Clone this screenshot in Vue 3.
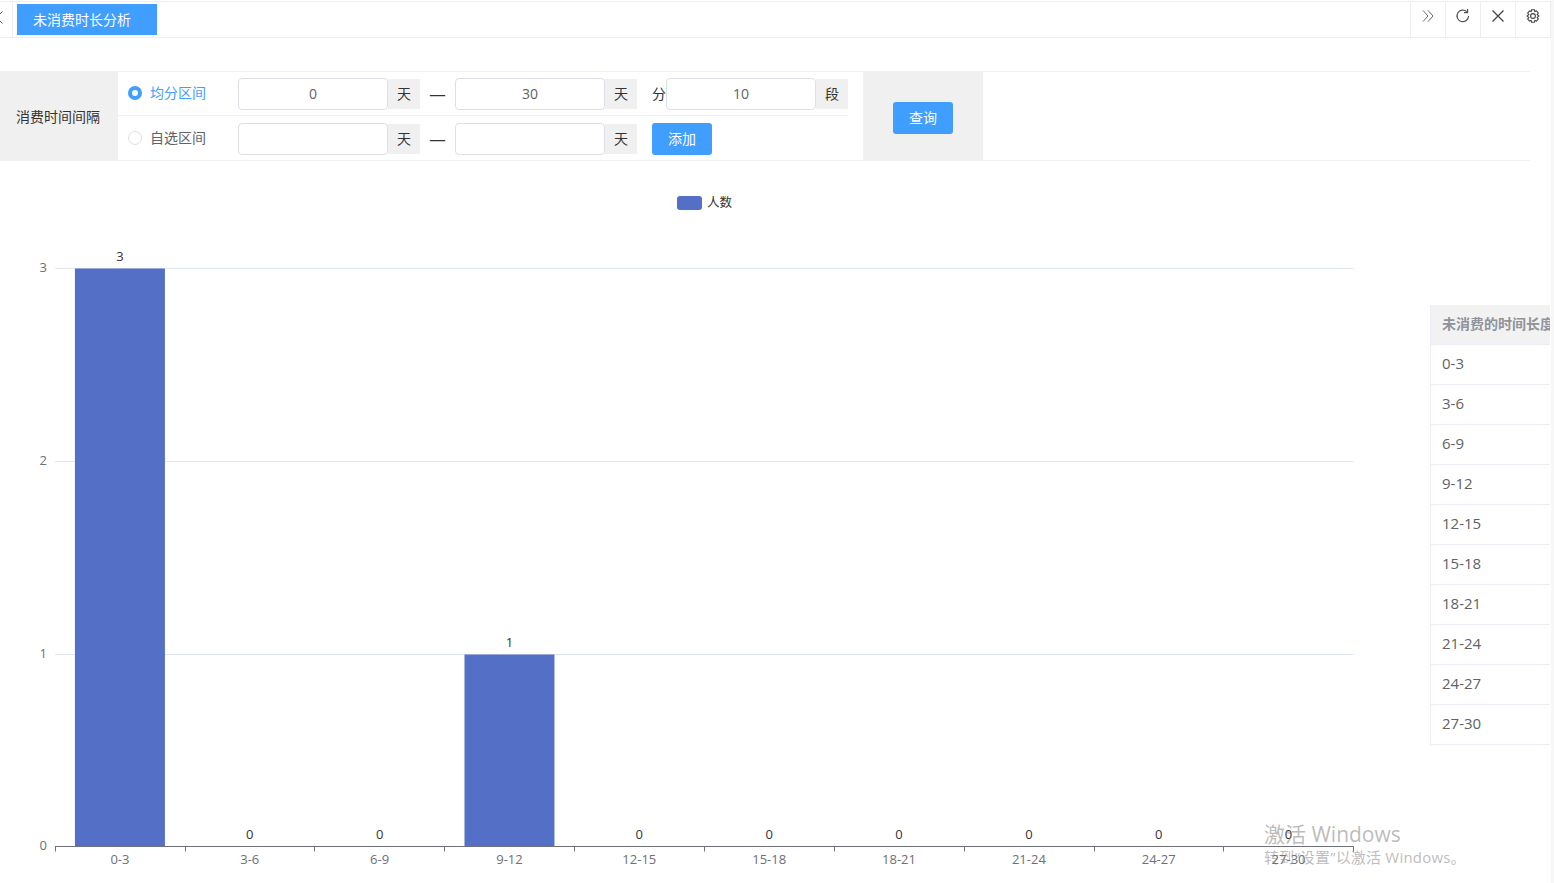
<script setup>
import { ref, computed } from "vue";

const startDay = ref("0");
const endDay = ref("30");
const segments = ref("10");
const mode = ref("avg");
const customStart = ref("");
const customEnd = ref("");

// 每段 3 天，人数
const rows = [
  { name: "0-3", value: 3 },
  { name: "3-6", value: 0 },
  { name: "6-9", value: 0 },
  { name: "9-12", value: 1 },
  { name: "12-15", value: 0 },
  { name: "15-18", value: 0 },
  { name: "18-21", value: 0 },
  { name: "21-24", value: 0 },
  { name: "24-27", value: 0 },
  { name: "27-30", value: 0 },
];

// 圖表座標，svg 從頁面 y=161 開始
const left = 55;
const right = 1353.5;
const top = 107.5;
const bottom = 685.5;
const step = (right - left) / rows.length;
const barWidth = 90;

const yOf = (v) => Math.ceil(bottom - ((bottom - top) / 3) * v - 0.5) + 0.5;
const bars = computed(() =>
  rows.map((r, i) => ({
    ...r,
    cx: left + step * i + step / 2,
    y: yOf(r.value),
    h: bottom - yOf(r.value),
  }))
);
const ticks = computed(() =>
  Array.from({ length: rows.length + 1 }, (_, i) => Math.trunc(left + step * i + 0.2) + 0.5)
);
</script>

<template>
  <div class="page">
    <div class="tabs">
      <div class="tab-prev">
        <svg width="12" height="35" viewBox="0 0 12 35" fill="none" stroke="#555" stroke-width="1">
          <path d="M2.5 9.5 L0 12 M2.5 21.5 L0 19" />
        </svg>
      </div>
      <div class="tab-active">未消费时长分析</div>
      <div class="tab-tools">
        <button class="tool">
          <svg width="16" height="16" viewBox="0 0 16 16" fill="none" stroke="#666" stroke-width="1">
            <path d="M3 2.5 L8 8 L3 13.5 M8 2.5 L13 8 L8 13.5" />
          </svg>
        </button>
        <button class="tool">
          <svg width="16" height="16" viewBox="0 0 16 16" fill="none" stroke="#555" stroke-width="1.2">
            <path d="M13.6 8 A5.8 5.8 0 1 1 11.8 3.7" />
            <path d="M12.6 1 V4.6 H9" />
          </svg>
        </button>
        <button class="tool">
          <svg width="16" height="16" viewBox="0 0 16 16" fill="none" stroke="#444" stroke-width="1.3">
            <path d="M2.5 2.5 L13.5 13.5 M13.5 2.5 L2.5 13.5" />
          </svg>
        </button>
        <button class="tool">
          <svg width="16" height="16" viewBox="0 0 16 16" fill="none" stroke="#444" stroke-width="1.1">
            <path d="M6.6 1.8 H9.4 L9.9 3.5 L11.5 2.9 L13.3 5 L12.2 6.4 L13.9 8 L12.2 9.6 L13.3 11 L11.5 13.1 L9.9 12.5 L9.4 14.2 H6.6 L6.1 12.5 L4.5 13.1 L2.7 11 L3.8 9.6 L2.1 8 L3.8 6.4 L2.7 5 L4.5 2.9 L6.1 3.5 Z" />
            <circle cx="8" cy="8" r="2.4" />
          </svg>
        </button>
      </div>
    </div>

    <div class="filter">
      <div class="filter-label">消费时间间隔</div>
      <div class="filter-rows">
        <div class="filter-row">
          <label class="radio" :class="{ checked: mode === 'avg' }" @click="mode = 'avg'">
            <span class="dot"></span>均分区间
          </label>
          <input class="num" v-model="startDay" />
          <span class="unit">天</span>
          <span class="dash">—</span>
          <input class="num" v-model="endDay" />
          <span class="unit">天</span>
          <span class="fen">分</span>
          <input class="num" v-model="segments" />
          <span class="unit">段</span>
        </div>
        <div class="filter-row">
          <label class="radio" :class="{ checked: mode === 'custom' }" @click="mode = 'custom'">
            <span class="dot"></span>自选区间
          </label>
          <input class="num" v-model="customStart" />
          <span class="unit">天</span>
          <span class="dash">—</span>
          <input class="num" v-model="customEnd" />
          <span class="unit">天</span>
          <button class="btn add">添加</button>
        </div>
      </div>
      <div class="filter-action">
        <button class="btn">查询</button>
      </div>
    </div>

    <div class="content">
      <svg class="chart" width="1430" height="722" viewBox="0 0 1430 722">
        <rect x="677" y="35" width="25" height="14" rx="3" fill="#5470c6" />
        <text x="707" y="46" class="legend">人数</text>

        <line v-for="v in [1, 2, 3]" :key="v" :x1="left" :x2="right" :y1="yOf(v)" :y2="yOf(v)" stroke="#e0e6f1" />
        <text v-for="v in [0, 1, 2, 3]" :key="'y' + v" x="47" :y="yOf(v) + 3" text-anchor="end" class="axis">{{ v }}</text>

        <template v-for="b in bars" :key="b.name">
          <rect v-if="b.value" :x="b.cx - barWidth / 2" :y="b.y" :width="barWidth" :height="b.h" fill="#5470c6" />
          <text :x="b.cx" :y="b.y - 8" text-anchor="middle" class="val">{{ b.value }}</text>
          <text :x="b.cx" y="703" text-anchor="middle" class="axis">{{ b.name }}</text>
        </template>

        <line :x1="left" :x2="right" :y1="bottom" :y2="bottom" stroke="#6e7079" />
        <line v-for="t in ticks" :key="t" :x1="t" :x2="t" :y1="bottom" :y2="bottom + 5" stroke="#6e7079" />
      </svg>

      <div class="table">
        <div class="cell head">未消费的时间长度</div>
        <div class="cell" v-for="r in rows" :key="r.name">{{ r.name }}</div>
      </div>
    </div>

    <div class="watermark">
      <div class="wm-title">激活 Windows</div>
      <div class="wm-sub">转到“设置”以激活 Windows。</div>
    </div>
  </div>
</template>

<style>
html,
body {
  margin: 0;
  overflow: hidden;
  background: #fff;
}
</style>

<style scoped>
.page {
  position: relative;
  box-sizing: border-box;
  width: 1554px;
  height: 883px;
  overflow: hidden;
  border-right: 3px solid #f7f7f7;
  font-family: "Open Sans", "Noto Sans CJK SC", sans-serif;
  font-size: 14px;
  color: #333;
}
.tabs {
  display: flex;
  box-sizing: border-box;
  width: 1551px;
  height: 37px;
  margin-top: 1px;
  border-top: 1px solid #eee;
  border-bottom: 1px solid #eee;
  border-right: 1px solid #eee;
}
.tab-prev {
  box-sizing: border-box;
  width: 13px;
  height: 35px;
  border-right: 1px solid #eee;
}
.tab-active {
  box-sizing: border-box;
  width: 140px;
  height: 31px;
  margin: 2px 0 0 4px;
  padding-left: 16px;
  line-height: 31px;
  color: #fff;
  background: #409eff;
  font-family: "Noto Sans CJK SC", sans-serif;
}
.tab-tools {
  display: flex;
  margin-left: auto;
}
.tool {
  display: flex;
  justify-content: center;
  box-sizing: border-box;
  width: 35px;
  height: 35px;
  padding: 6px 0 0;
  border: 0;
  border-left: 1px solid #eee;
  background: #fff;
}
.filter {
  display: flex;
  box-sizing: border-box;
  width: 1530px;
  height: 90px;
  margin-top: 33px;
  border-top: 1px solid #f0f0f0;
  border-bottom: 1px solid #f0f0f0;
  font-family: "Noto Sans CJK SC", sans-serif;
}
.filter-label {
  display: flex;
  align-items: center;
  justify-content: center;
  box-sizing: border-box;
  width: 118px;
  margin: -1px 0;
  padding-right: 2px;
  background: #f0f0f0;
}
.filter-rows {
  width: 730px;
}
.filter-row {
  display: flex;
  align-items: center;
  box-sizing: border-box;
  height: 44px;
}
.filter-row:first-child {
  padding-top: 1px;
  border-bottom: 1px solid #f0f0f0;
}
.filter-row:last-child {
  padding-top: 2px;
}
.radio {
  display: flex;
  align-items: center;
  width: 120px;
  padding: 0 0 5px 10px;
  box-sizing: border-box;
  color: #606266;
  cursor: pointer;
}
.radio.checked {
  color: #409eff;
}
.dot {
  box-sizing: border-box;
  width: 14px;
  height: 14px;
  margin: 2px 8px 0 0;
  border: 1px solid #dcdfe6;
  border-radius: 50%;
}
.radio.checked .dot {
  border: 4.5px solid #409eff;
  background: #fff;
}
.num {
  box-sizing: border-box;
  width: 150px;
  height: 32px;
  padding: 0 15px 2px;
  border: 1px solid #dcdfe6;
  border-radius: 4px;
  outline: none;
  text-align: center;
  font-family: "Open Sans", sans-serif;
  font-size: 14px;
  color: #606266;
}
.unit {
  width: 32px;
  height: 30px;
  line-height: 28px;
  text-align: center;
  background: #f0f0f0;
}
.dash {
  width: 35px;
  line-height: 20px;
  padding-bottom: 2px;
  text-align: center;
  font-size: 19px;
}
.fen {
  width: 14px;
  margin-left: 15px;
  padding-bottom: 2px;
}
.btn {
  width: 60px;
  height: 32px;
  padding: 0 0 2px;
  border: 0;
  border-radius: 3px;
  color: #fff;
  background: #409eff;
  font-family: "Noto Sans CJK SC", sans-serif;
  font-size: 14px;
}
.add {
  margin-left: 15px;
}
.filter-action {
  display: flex;
  align-items: center;
  justify-content: center;
  box-sizing: border-box;
  width: 120px;
  margin: -1px 0 -1px 15px;
  padding-top: 4px;
  background: #f0f0f0;
}
.content {
  display: flex;
  width: 1550px;
  overflow: hidden;
}
.chart {
  flex: none;
  display: block;
}
.legend,
.val,
.axis {
  font-family: "Open Sans", "Noto Sans CJK SC", sans-serif;
  font-size: 13px;
}
.legend {
  font-size: 12.5px;
}
.legend,
.val {
  fill: #333;
}
.axis {
  fill: #6e7079;
}
.table {
  flex: none;
  box-sizing: border-box;
  width: 140px;
  height: 441px;
  margin-top: 144px;
  border-left: 1px solid #ebeef5;
}
.cell {
  box-sizing: border-box;
  height: 40px;
  padding-left: 11px;
  line-height: 36px;
  border-bottom: 1px solid #ebeef5;
  font-size: 15px;
  color: #606266;
  white-space: nowrap;
}
.head {
  font-weight: 700;
  font-size: 14px;
  font-family: "Noto Sans CJK SC", sans-serif;
  color: #909399;
  background: #f2f2f2;
}
.watermark {
  position: absolute;
  left: 1264px;
  top: 820px;
  color: rgba(120, 120, 120, 0.5);
  font-family: "Open Sans", "Noto Sans CJK SC", sans-serif;
  pointer-events: none;
}
.wm-title {
  font-size: 21px;
  line-height: 28px;
}
.wm-sub {
  margin-top: -1px;
  font-size: 15px;
  line-height: 20px;
  letter-spacing: 0.2px;
}
</style>
